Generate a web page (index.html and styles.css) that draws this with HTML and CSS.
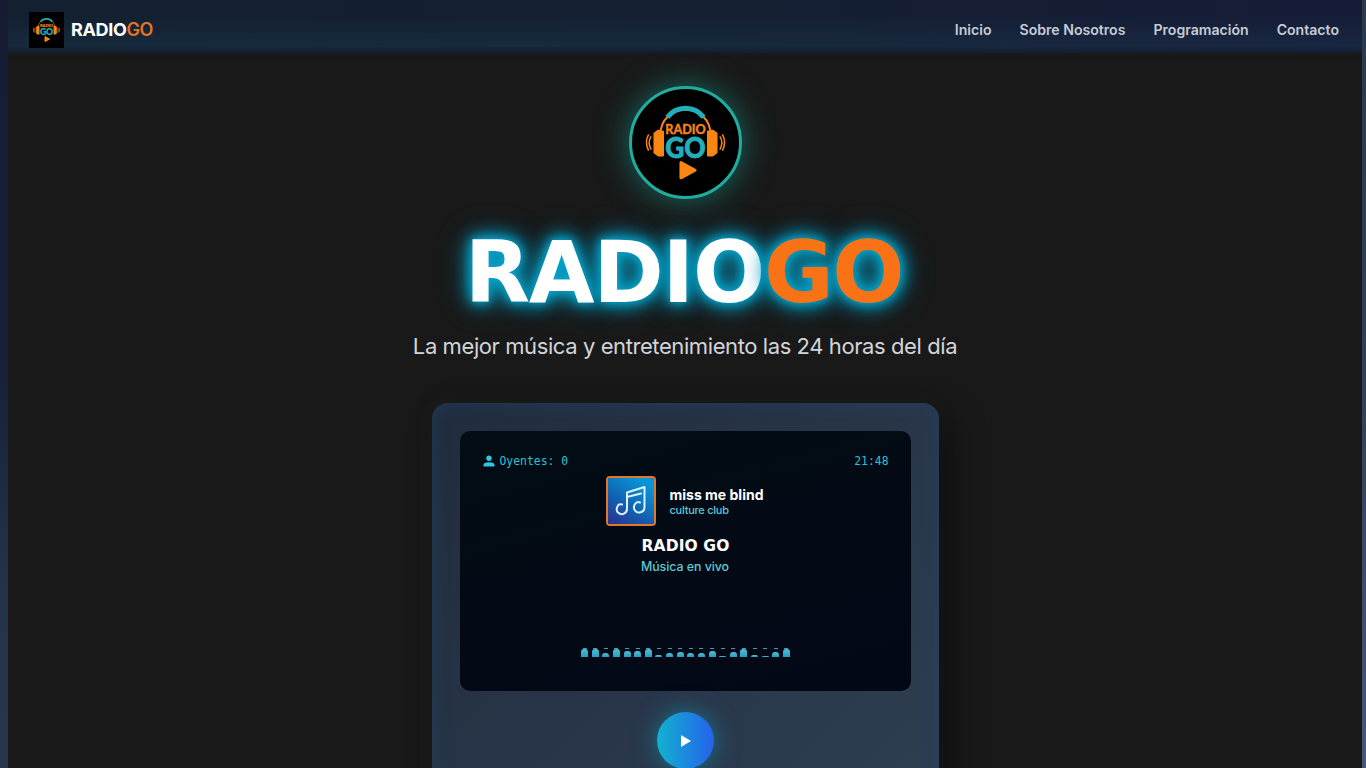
FILE: index.html
```html
<!DOCTYPE html>
<html lang="es">
<head>
<meta charset="utf-8">
<title>RadioGo</title>
<link rel="stylesheet" href="styles.css">
</head>
<body>
<div class="page">
  <header class="bar">
    <a class="brand">
      <svg class="brand-logo" viewBox="3 3 106 106">
        <path d="M31 49C31 15 81 15 81 49" fill="none" stroke="#f98612" stroke-width="2"/>
        <path d="M38 31C47 19 65 19 74 31" fill="none" stroke="#22aebd" stroke-width="5"/>
        <path d="M34 45l-5-1-4 3v19l4 3h5zM78 45l5-1 4 3v19l-4 3h-5z" fill="#f98612" stroke="#f98612" stroke-width="1.5" stroke-linejoin="round"/>
        <path d="M22 50q-4 6 0 13M18.500 48q-4.500 8 0 16M90 50q4 6 0 13M93.500 48q4.500 8 0 16" fill="none" stroke="#f98612" stroke-width="2"/>
        <text x="36" y="48" textLength="40" lengthAdjust="spacingAndGlyphs" class="mark mark-top">RADIO</text>
        <text x="36" y="72" textLength="40" lengthAdjust="spacingAndGlyphs" class="mark mark-big">GO</text>
        <path d="M51.500 76v15l14-7.500z" fill="#f98612" stroke="#f98612" stroke-width="3" stroke-linejoin="round"/>
      </svg>
      <span>RADIO<b>GO</b></span>
    </a>
    <nav class="nav"><a>Inicio</a><a>Sobre Nosotros</a><a>Programación</a><a>Contacto</a></nav>
  </header>
  <main class="hero">
    <div class="badge">
      <svg viewBox="3 3 106 106">
        <path d="M31 49C31 15 81 15 81 49" fill="none" stroke="#f98612" stroke-width="2"/>
        <path d="M38 31C47 19 65 19 74 31" fill="none" stroke="#22aebd" stroke-width="5"/>
        <path d="M34 45l-5-1-4 3v19l4 3h5zM78 45l5-1 4 3v19l-4 3h-5z" fill="#f98612" stroke="#f98612" stroke-width="1.5" stroke-linejoin="round"/>
        <path d="M22 50q-4 6 0 13M19.500 48q-4.500 8 0 16M90 50q4 6 0 13M92.500 48q4.500 8 0 16" fill="none" stroke="#f98612" stroke-width="1.500"/>
        <text x="36" y="48" textLength="40" lengthAdjust="spacingAndGlyphs" class="mark mark-top">RADIO</text>
        <text x="36" y="71.500" textLength="40" lengthAdjust="spacingAndGlyphs" class="mark mark-big">GO</text>
        <path d="M51.500 76v15l14-7.500z" fill="#f98612" stroke="#f98612" stroke-width="3" stroke-linejoin="round"/>
      </svg>
    </div>
    <h1 class="title">RADIO<span>GO</span></h1>
    <p class="tagline">La mejor música y entretenimiento las 24 horas del día</p>
    <section class="player">
      <div class="screen">
        <div class="status">
          <span class="listeners"><svg width="12" height="12" viewBox="0 0 12 12"><circle cx="6" cy="3.300" r="2.700"/><path d="M.5 11.500V10q0-2.700 5.500-2.700T11.500 10v1.500z"/></svg>Oyentes: 0</span>
          <span>21:48</span>
        </div>
        <div class="track">
          <svg class="cover" viewBox="0 0 46 46"><defs><linearGradient id="sky" x1="0" y1="1" x2=".65" y2="0"><stop stop-color="#2c2f8f"/><stop offset=".45" stop-color="#125fb0"/><stop offset="1" stop-color="#0797d8"/></linearGradient></defs><rect width="46" height="46" fill="url(#sky)"/><path d="M14 26.500c-4-2-7 5-4 8 4 3.500 9 1 9-4V14.500L36.500 9v20c0 6-7 7-9.500 3.500-3-4 1-10 5-8M19 19l14-3.500" fill="none" stroke="#def1ff" stroke-width="2" stroke-linecap="round" stroke-linejoin="round"/></svg>
          <div><div class="song">miss me blind</div><div class="artist">culture club</div></div>
        </div>
        <div class="station">RADIO GO</div>
        <div class="live">Música en vivo</div>
        <div class="equalizer"><i class="full"></i><i class="full"></i><i class="small"></i><i class="full"></i><i class="mid"></i><i class="mid"></i><i class="full"></i><i class="low"></i><i class="small"></i><i class="half"></i><i class="small"></i><i class="small"></i><i class="mid"></i><i class="flat"></i><i class="half"></i><i class="full"></i><i class="low"></i><i class="flat"></i><i class="half"></i><i class="full"></i></div>
      </div>
      <button class="play" aria-label="Reproducir"><svg width="12" height="14" viewBox="0 0 12 14"><path d="M1 1l10 6-10 6z" fill="#fff"/></svg></button>
    </section>
  </main>
</div>
</body>
</html>
```
FILE: styles.css
```css
* { box-sizing: border-box; }
body {
  margin: 0;
  height: 768px;
  overflow: hidden;
  padding: 0 4px 0 8px;
  font-family: Inter, sans-serif;
  background: linear-gradient(#151b32, #18213a 50%, #233249 75%, #27374b) 0 0 / 8px 100% no-repeat, linear-gradient(#2b394e, #304059 50%, #455b75) 100% 0 / 4px 100% no-repeat, #191919;
}
.page { height: 768px; background: #191919; overflow: hidden; }
.bar {
  height: 52px;
  padding: 8px 23px 0 21px;
  display: flex;
  justify-content: space-between;
  background: linear-gradient(transparent 30%, rgba(28, 58, 80, .38) 88%, transparent), linear-gradient(90deg, #132030, #141f32 55%, #161c38);
  box-shadow: 0 0 4px rgba(24, 40, 55, .8);
}
.brand { display: flex; height: 44px; padding-top: 4px; gap: 7px; color: #fff; font-size: 18px; line-height: 36px; font-weight: 700; letter-spacing: -.35px; }
.brand b { color: #e57325; font-weight: 600; }
.brand-logo { width: 35px; height: 36px; background: #000; }
.nav { display: flex; gap: 28px; padding-top: 11px; font-size: 14.1px; line-height: 22px; font-weight: 600; color: #c5ccd6; }
.mark { font-family: Lato, sans-serif; font-weight: 700; }
.mark-top { font-size: 13px; fill: #f98612; stroke: #f98612; stroke-width: .4px; }
.mark-big { font-size: 28px; font-weight: 900; fill: #22aebd; stroke: #22aebd; stroke-width: .8px; }
.hero { display: flex; flex-direction: column; align-items: center; padding-top: 34px; }
.badge { width: 113px; height: 113px; border: 3px solid #1fae9e; border-radius: 50%; background: #000; overflow: hidden; box-shadow: 0 0 32px rgba(20, 184, 166, .52); }
.badge svg { display: block; width: 107px; height: 107px; }
.title {
  margin: 29px 2px 0 0;
  height: 90px;
  line-height: 90px;
  font-family: "DejaVu Sans", sans-serif;
  font-size: 85px;
  font-weight: 700;
  letter-spacing: -1.3px;
  white-space: nowrap;
  color: #fff;
  text-shadow: 0 0 10px #06a9d0, 0 0 18px #069fc6, 0 0 22px #0699be, 0 0 34px rgba(6, 160, 200, .4);
}
.title span { color: #f97316; }
.tagline { margin: 11px 0 0; font-size: 22px; line-height: 34px; letter-spacing: -.41px; color: #d1d5db; white-space: nowrap; }
.player {
  width: 507px;
  height: 420px;
  margin-top: 40px;
  padding: 28px;
  border-radius: 16px;
  display: flex;
  flex-direction: column;
  align-items: center;
  background: linear-gradient(135deg, #212c3d, #2c3a4e 75%, #303e52);
  box-shadow: inset 0 0 18px rgba(30, 75, 115, .48), 12px 12px 35px rgba(0, 0, 0, .4), 0 0 18px rgba(55, 55, 50, .2);
}
.screen {
  width: 451px;
  height: 260px;
  flex: none;
  padding: 20px 22px 0 23px;
  border-radius: 10px;
  display: flex;
  flex-direction: column;
  align-items: center;
  background: linear-gradient(165deg, #020d14, #030915 55%, #030816);
}
.status { width: 100%; height: 20px; display: flex; justify-content: space-between; font: 11.4px/20px "DejaVu Sans Mono", monospace; color: #2cc0d0; }
.listeners { display: flex; align-items: center; gap: 5px; }
.listeners svg { fill: #2fc8df; }
.track { display: flex; align-items: center; gap: 14px; margin: 5px 2px 0 0; height: 50px; }
.cover { width: 50px; height: 50px; border: 2px solid #e0782c; border-radius: 4px; }
.song { font-size: 14px; line-height: 17px; font-weight: 700; color: #fff; }
.artist { font-size: 11px; line-height: 14px; font-weight: 500; letter-spacing: -.25px; color: #5bc8d8; }
.station { margin-top: 10px; font: 700 15.5px/20px "DejaVu Sans", sans-serif; letter-spacing: .1px; color: #fff; }
.live { margin: 1px 1px 0 0; font-size: 12.4px; line-height: 20px; font-weight: 500; letter-spacing: -.05px; color: #5dc8d3; }
.equalizer { margin-top: 71px; width: 209px; height: 9px; display: flex; align-items: flex-end; justify-content: space-between; }
.equalizer i { width: 7px; height: 9px; display: flex; flex-direction: column; justify-content: space-between; align-items: center; }
.equalizer i::before { content: ""; width: 4px; height: 1px; background: #3d9daf; }
.equalizer i::after { content: ""; width: 7px; height: 4px; border-radius: 3px 3px 0 0; background: linear-gradient(#53bdd3, #229fc0); }
.equalizer .full::after { height: 8px; }
.equalizer .mid::after { height: 6px; }
.equalizer .half::after { height: 5px; }
.equalizer .low::after { height: 2px; }
.equalizer .flat::after { height: 1px; }
.play { flex: none; width: 57px; height: 57px; margin-top: 21px; padding: 0 0 0 2px; border: 0; border-radius: 50%; display: grid; place-items: center; background: linear-gradient(90deg, #12b2d0, #2563eb); box-shadow: 0 0 24px rgba(6, 182, 212, .5); }
```
